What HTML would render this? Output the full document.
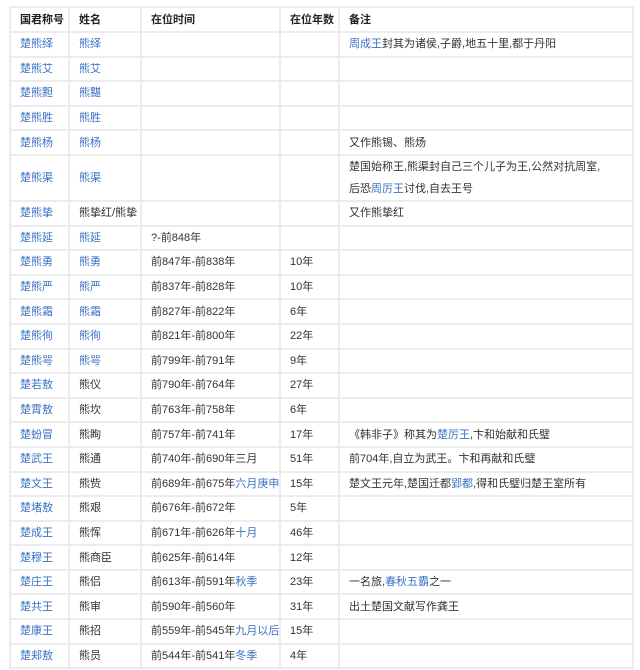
<!DOCTYPE html>
<html><head><meta charset="utf-8"><style>
html,body{margin:0;padding:0;background:#fff;width:640px;height:670px;overflow:hidden}
table{position:absolute;left:9px;top:6px;border-collapse:collapse;table-layout:fixed;width:625px;font-family:"Liberation Sans","Noto Sans CJK SC",sans-serif;font-size:11px;color:#333}
td,th{border:2px solid #ececec;padding:0 0 0 9px;text-align:left;vertical-align:middle;height:22.6px;line-height:14px;white-space:nowrap;overflow:hidden}
th{height:23px;font-weight:bold;color:#222}
td.tall{height:43px;line-height:22px}
a{color:#3a72c4;text-decoration:none}
</style></head><body>
<table>
<colgroup><col style="width:59px"><col style="width:72px"><col style="width:139px"><col style="width:59px"><col></colgroup>
<tr><th>国君称号</th><th>姓名</th><th>在位时间</th><th>在位年数</th><th>备注</th></tr>
<tr><td><a>楚熊绎</a></td><td><a>熊绎</a></td><td></td><td></td><td><a>周成王</a>封其为诸侯,子爵,地五十里,都于丹阳</td></tr>
<tr><td><a>楚熊艾</a></td><td><a>熊艾</a></td><td></td><td></td><td></td></tr>
<tr><td><a>楚熊䵣</a></td><td><a>熊黮</a></td><td></td><td></td><td></td></tr>
<tr><td><a>楚熊胜</a></td><td><a>熊胜</a></td><td></td><td></td><td></td></tr>
<tr><td><a>楚熊杨</a></td><td><a>熊杨</a></td><td></td><td></td><td>又作熊锡、熊炀</td></tr>
<tr><td class="tall"><a>楚熊渠</a></td><td class="tall"><a>熊渠</a></td><td class="tall"></td><td class="tall"></td><td class="tall">楚国始称王,熊渠封自己三个儿子为王,公然对抗周室,<br>后恐<a>周厉王</a>讨伐,自去王号</td></tr>
<tr><td><a>楚熊挚</a></td><td>熊挚红/熊挚</td><td></td><td></td><td>又作熊挚红</td></tr>
<tr><td><a>楚熊延</a></td><td><a>熊延</a></td><td>?-前848年</td><td></td><td></td></tr>
<tr><td><a>楚熊勇</a></td><td><a>熊勇</a></td><td>前847年-前838年</td><td>10年</td><td></td></tr>
<tr><td><a>楚熊严</a></td><td><a>熊严</a></td><td>前837年-前828年</td><td>10年</td><td></td></tr>
<tr><td><a>楚熊霜</a></td><td><a>熊霜</a></td><td>前827年-前822年</td><td>6年</td><td></td></tr>
<tr><td><a>楚熊徇</a></td><td><a>熊徇</a></td><td>前821年-前800年</td><td>22年</td><td></td></tr>
<tr><td><a>楚熊咢</a></td><td><a>熊咢</a></td><td>前799年-前791年</td><td>9年</td><td></td></tr>
<tr><td><a>楚若敖</a></td><td>熊仪</td><td>前790年-前764年</td><td>27年</td><td></td></tr>
<tr><td><a>楚霄敖</a></td><td>熊坎</td><td>前763年-前758年</td><td>6年</td><td></td></tr>
<tr><td><a>楚蚡冒</a></td><td>熊眴</td><td>前757年-前741年</td><td>17年</td><td>《韩非子》称其为<a>楚厉王</a>,卞和始献和氏璧</td></tr>
<tr><td><a>楚武王</a></td><td>熊通</td><td>前740年-前690年三月</td><td>51年</td><td>前704年,自立为武王。卞和再献和氏璧</td></tr>
<tr><td><a>楚文王</a></td><td>熊赀</td><td>前689年-前675年<a>六月庚申</a></td><td>15年</td><td>楚文王元年,楚国迁都<a>郢都</a>,得和氏璧归楚王室所有</td></tr>
<tr><td><a>楚堵敖</a></td><td>熊艰</td><td>前676年-前672年</td><td>5年</td><td></td></tr>
<tr><td><a>楚成王</a></td><td>熊恽</td><td>前671年-前626年<a>十月</a></td><td>46年</td><td></td></tr>
<tr><td><a>楚穆王</a></td><td>熊商臣</td><td>前625年-前614年</td><td>12年</td><td></td></tr>
<tr><td><a>楚庄王</a></td><td>熊侣</td><td>前613年-前591年<a>秋季</a></td><td>23年</td><td>一名旅,<a>春秋五霸</a>之一</td></tr>
<tr><td><a>楚共王</a></td><td>熊审</td><td>前590年-前560年</td><td>31年</td><td>出土楚国文献写作龚王</td></tr>
<tr><td><a>楚康王</a></td><td>熊招</td><td>前559年-前545年<a>九月以后</a></td><td>15年</td><td></td></tr>
<tr><td><a>楚郏敖</a></td><td>熊员</td><td>前544年-前541年<a>冬季</a></td><td>4年</td><td></td></tr>
</table>
</body></html>
